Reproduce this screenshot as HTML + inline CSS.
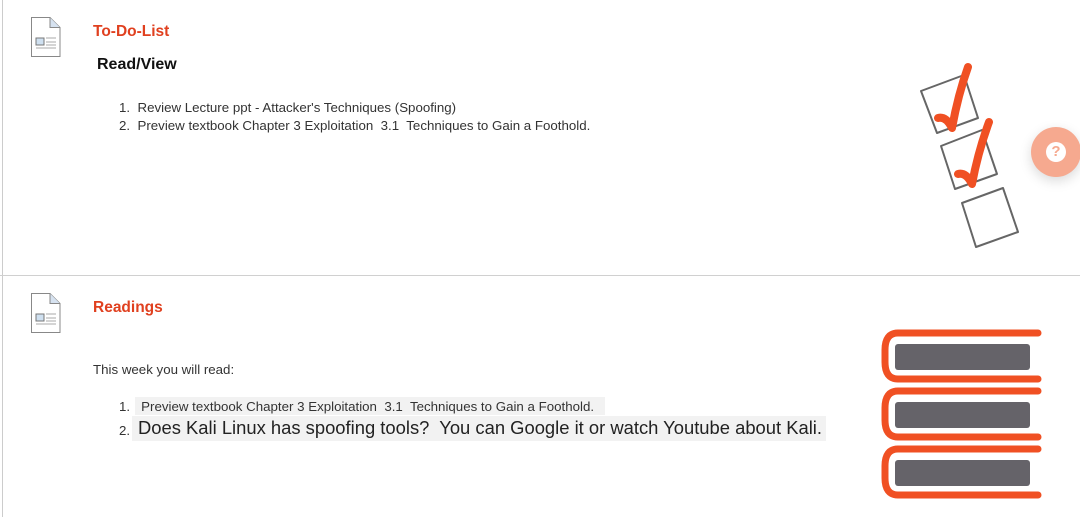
<!DOCTYPE html>
<html><head><style>
body{margin:0;width:1080px;height:517px;background:#fff;font-family:"Liberation Sans",sans-serif;position:relative;overflow:hidden;color:#222}
.a{position:absolute;white-space:nowrap}
.t{color:#e0401f;font-weight:bold;font-size:15.5px}
.s{font-size:13.3px;color:#333}
</style></head><body>
<div class="a" style="left:2px;top:0;width:1px;height:275px;background:#ccc"></div>
<div class="a" style="left:0;top:275px;width:1080px;height:1px;background:#d0d0d0"></div>
<div class="a" style="left:2px;top:276px;width:1px;height:241px;background:#ccc"></div>

<svg class="a" style="left:30px;top:16px" width="32" height="42" viewBox="0 0 32 42"><path d="M1.5 1.5H20L30 11.5V40.5H1.5Z" fill="#fff" stroke="#888"/><path d="M20 1.5V11.5H30" fill="#d6e2f0" stroke="#888"/><rect x="6" y="22" width="8" height="7" fill="#cfe0f0" stroke="#777"/><path d="M16 22H26M16 26H26M6 32H26M16 29H26" stroke="#aaa"/></svg>
<svg class="a" style="left:30px;top:292px" width="32" height="42" viewBox="0 0 32 42"><path d="M1.5 1.5H20L30 11.5V40.5H1.5Z" fill="#fff" stroke="#888"/><path d="M20 1.5V11.5H30" fill="#d6e2f0" stroke="#888"/><rect x="6" y="22" width="8" height="7" fill="#cfe0f0" stroke="#777"/><path d="M16 22H26M16 26H26M6 32H26M16 29H26" stroke="#aaa"/></svg>

<div class="a t" style="left:93px;top:23px">To-Do-List</div>
<div class="a" style="left:97px;top:56px;font-weight:bold;font-size:16px;color:#111">Read/View</div>
<div class="a s" style="left:119px;top:100px">1.&nbsp; Review Lecture ppt - Attacker's Techniques (Spoofing)</div>
<div class="a s" style="left:119px;top:118px">2.&nbsp; Preview textbook Chapter 3 Exploitation&nbsp; 3.1&nbsp; Techniques to Gain a Foothold.</div>

<div class="a t" style="left:93px;top:299px">Readings</div>
<div class="a s" style="left:93px;top:362px">This week you will read:</div>
<div class="a" style="left:135px;top:397px;width:470px;height:18px;background:#f2f2f2"></div>
<div class="a" style="left:132px;top:416px;width:694px;height:25px;background:#f2f2f2"></div>
<div class="a s" style="left:119px;top:399px">1.&nbsp;&nbsp; Preview textbook Chapter 3 Exploitation&nbsp; 3.1&nbsp; Techniques to Gain a Foothold.</div>
<div class="a s" style="left:119px;top:423px">2.</div>
<div class="a" style="left:138px;top:417px;font-size:18.4px;color:#222">Does Kali Linux has spoofing tools?&nbsp; You can Google it or watch Youtube about Kali.</div>

<svg class="a" style="left:860px;top:50px" width="220" height="210" viewBox="0 0 220 210">
<g fill="none" stroke="#666" stroke-width="2" stroke-linejoin="round">
<path d="M61 41L104 25L118 68L77 83Z"/>
<path d="M81 96L122 80L137 124L95 139Z"/>
<path d="M102 153L143 138L158 182L116 197Z"/>
</g>
<g fill="none" stroke="#f05023" stroke-width="8" stroke-linecap="round" stroke-linejoin="round">
<path d="M78 68Q86 66 92 78Q98 45 108 17"/>
<path d="M98 124Q106 122 112 134Q118 102 129 72"/>
</g>
</svg>
<div class="a" style="left:1031px;top:127px;width:50px;height:50px;border-radius:50%;background:#f6a98f;box-shadow:0 4px 12px rgba(0,0,0,.15)"></div>
<div class="a" style="left:1046px;top:142px;width:20px;height:20px;border-radius:50%;background:#fff;color:#f6a98f;font-weight:bold;font-size:15px;text-align:center;line-height:20px">?</div>

<svg class="a" style="left:860px;top:320px" width="220" height="197" viewBox="0 0 220 197">
<g fill="none" stroke="#f05023" stroke-width="7" stroke-linecap="round">
<path d="M178 13H38Q25 13 25 30V42Q25 59 38 59H178"/>
<path d="M178 71H38Q25 71 25 88V100Q25 117 38 117H178"/>
<path d="M178 129H38Q25 129 25 146V158Q25 175 38 175H178"/>
</g>
<g fill="#656369"><rect x="35" y="24" width="135" height="26" rx="3"/><rect x="35" y="82" width="135" height="26" rx="3"/><rect x="35" y="140" width="135" height="26" rx="3"/></g>
</svg>
</body></html>
